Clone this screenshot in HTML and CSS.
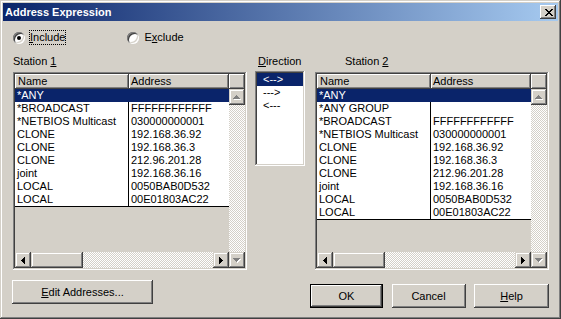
FILE: index.html
```html
<!DOCTYPE html>
<html lang="en">
<head>
    <meta charset="UTF-8">
    <title>Address Expression</title>
    <link rel="stylesheet" href="styles.css">
</head>
<body>
    <div class="window">
        <div class="titlebar">
            <span class="title">Address Expression</span>
            <span class="close-btn">
                <svg width="8" height="7" viewBox="0 0 8 7"><path d="M0 0h2v1h-2zM6 0h2v1h-2zM1 1h2v1h-2zM5 1h2v1h-2zM2 2h4v1h-4zM3 3h2v1h-2zM2 4h4v1h-4zM1 5h2v1h-2zM5 5h2v1h-2zM0 6h2v1h-2zM6 6h2v1h-2z" fill="#000"/></svg>
            </span>
        </div>

        <div class="content">
            <div class="mode-row">
                <label class="radio">
                    <span class="radio-dot checked"></span>
                    <span class="radio-text focused"><u>I</u>nclude</span>
                </label>
                <label class="radio exclude">
                    <span class="radio-dot"></span>
                    <span class="radio-text">E<u>x</u>clude</span>
                </label>
            </div>

            <div class="panes">
                <!-- Station 1 -->
                <div class="station">
                    <div class="pane-label">Station <u>1</u></div>
                    <div class="grid">
                        <div class="grid-head">
                            <span class="head-cell col-name">Name</span>
                            <span class="head-cell col-addr">Address</span>
                            <span class="head-cell col-blank"></span>
                        </div>
                        <div class="grid-main">
                            <div class="rows-area">
                                <div class="rows">
                                    <div class="row selected"><span class="cell-name">*ANY</span><span class="cell-addr"></span></div>
                                    <div class="row"><span class="cell-name">*BROADCAST</span><span class="cell-addr">FFFFFFFFFFFF</span></div>
                                    <div class="row"><span class="cell-name">*NETBIOS Multicast</span><span class="cell-addr">030000000001</span></div>
                                    <div class="row"><span class="cell-name">CLONE</span><span class="cell-addr">192.168.36.92</span></div>
                                    <div class="row"><span class="cell-name">CLONE</span><span class="cell-addr">192.168.36.3</span></div>
                                    <div class="row"><span class="cell-name">CLONE</span><span class="cell-addr">212.96.201.28</span></div>
                                    <div class="row"><span class="cell-name">joint</span><span class="cell-addr">192.168.36.16</span></div>
                                    <div class="row"><span class="cell-name">LOCAL</span><span class="cell-addr">0050BAB0D532</span></div>
                                    <div class="row"><span class="cell-name">LOCAL</span><span class="cell-addr">00E01803AC22</span></div>
                                </div>
                            </div>
                            <div class="vscroll">
                                <span class="sb-btn">
                                    <svg width="8" height="5" viewBox="0 0 8 5"><path d="M4 1h1v1h-1zM3 2h3v1h-3zM2 3h5v1h-5zM1 4h7v1h-7z" fill="#fff"/><path d="M3 0h1v1h-1zM2 1h3v1h-3zM1 2h5v1h-5zM0 3h7v1h-7z" fill="#808080"/></svg>
                                </span>
                                <span class="track"></span>
                            </div>
                        </div>
                        <div class="grid-foot">
                            <div class="hscroll">
                                <span class="sb-btn">
                                    <svg width="4" height="7" viewBox="0 0 4 7"><path d="M3 0h1v7h-1zM2 1h1v5h-1zM1 2h1v3h-1zM0 3h1v1h-1z" fill="#000"/></svg>
                                </span>
                                <span class="thumb"></span>
                                <span class="track"></span>
                                <span class="sb-btn">
                                    <svg width="4" height="7" viewBox="0 0 4 7"><path d="M0 0h1v7h-1zM1 1h1v5h-1zM2 2h1v3h-1zM3 3h1v1h-1z" fill="#000"/></svg>
                                </span>
                            </div>
                            <span class="sb-btn">
                                <svg width="8" height="5" viewBox="0 0 8 5"><path d="M1 1h7v1h-7zM2 2h5v1h-5zM3 3h3v1h-3zM4 4h1v1h-1z" fill="#fff"/><path d="M0 0h7v1h-7zM1 1h5v1h-5zM2 2h3v1h-3zM3 3h1v1h-1z" fill="#808080"/></svg>
                            </span>
                        </div>
                    </div>
                    <button class="btn edit-btn"><u>E</u>dit Addresses...</button>
                </div>

                <!-- Direction -->
                <div class="direction">
                    <div class="pane-label dir-label"><u>D</u>irection</div>
                    <div class="dir-list">
                        <div class="dir-item selected">&lt;--&gt;</div>
                        <div class="dir-item">---&gt;</div>
                        <div class="dir-item">&lt;---</div>
                    </div>
                </div>

                <!-- Station 2 -->
                <div class="station station-right">
                    <div class="pane-label st2-label">Station <u>2</u></div>
                    <div class="grid">
                        <div class="grid-head">
                            <span class="head-cell col-name">Name</span>
                            <span class="head-cell col-addr">Address</span>
                            <span class="head-cell col-blank"></span>
                        </div>
                        <div class="grid-main">
                            <div class="rows-area">
                                <div class="rows">
                                    <div class="row selected"><span class="cell-name">*ANY</span><span class="cell-addr"></span></div>
                                    <div class="row"><span class="cell-name">*ANY GROUP</span><span class="cell-addr"></span></div>
                                    <div class="row"><span class="cell-name">*BROADCAST</span><span class="cell-addr">FFFFFFFFFFFF</span></div>
                                    <div class="row"><span class="cell-name">*NETBIOS Multicast</span><span class="cell-addr">030000000001</span></div>
                                    <div class="row"><span class="cell-name">CLONE</span><span class="cell-addr">192.168.36.92</span></div>
                                    <div class="row"><span class="cell-name">CLONE</span><span class="cell-addr">192.168.36.3</span></div>
                                    <div class="row"><span class="cell-name">CLONE</span><span class="cell-addr">212.96.201.28</span></div>
                                    <div class="row"><span class="cell-name">joint</span><span class="cell-addr">192.168.36.16</span></div>
                                    <div class="row"><span class="cell-name">LOCAL</span><span class="cell-addr">0050BAB0D532</span></div>
                                    <div class="row"><span class="cell-name">LOCAL</span><span class="cell-addr">00E01803AC22</span></div>
                                </div>
                            </div>
                            <div class="vscroll">
                                <span class="sb-btn">
                                    <svg width="8" height="5" viewBox="0 0 8 5"><path d="M4 1h1v1h-1zM3 2h3v1h-3zM2 3h5v1h-5zM1 4h7v1h-7z" fill="#fff"/><path d="M3 0h1v1h-1zM2 1h3v1h-3zM1 2h5v1h-5zM0 3h7v1h-7z" fill="#808080"/></svg>
                                </span>
                                <span class="track"></span>
                            </div>
                        </div>
                        <div class="grid-foot">
                            <div class="hscroll">
                                <span class="sb-btn">
                                    <svg width="4" height="7" viewBox="0 0 4 7"><path d="M3 0h1v7h-1zM2 1h1v5h-1zM1 2h1v3h-1zM0 3h1v1h-1z" fill="#000"/></svg>
                                </span>
                                <span class="thumb"></span>
                                <span class="track"></span>
                                <span class="sb-btn">
                                    <svg width="4" height="7" viewBox="0 0 4 7"><path d="M0 0h1v7h-1zM1 1h1v5h-1zM2 2h1v3h-1zM3 3h1v1h-1z" fill="#000"/></svg>
                                </span>
                            </div>
                            <span class="sb-btn">
                                <svg width="8" height="5" viewBox="0 0 8 5"><path d="M1 1h7v1h-7zM2 2h5v1h-5zM3 3h3v1h-3zM4 4h1v1h-1z" fill="#fff"/><path d="M0 0h7v1h-7zM1 1h5v1h-5zM2 2h3v1h-3zM3 3h1v1h-1z" fill="#808080"/></svg>
                            </span>
                        </div>
                    </div>
                    <div class="button-row">
                        <button class="btn default-btn">OK</button>
                        <button class="btn cancel-btn">Cancel</button>
                        <button class="btn help-btn"><u>H</u>elp</button>
                    </div>
                </div>
            </div>
        </div>
    </div>
</body>
</html>
```

FILE: styles.css
```css
/* Reset */
* {
    margin: 0;
    padding: 0;
    box-sizing: border-box;
}

body {
    font-family: 'Liberation Sans', Arial, sans-serif;
    font-size: 11px;
    color: #000;
    background: #d4d0c8;
    overflow: hidden;
}

u {
    text-decoration: underline;
    text-underline-offset: 1px;
}

/* Dialog frame */
.window {
    width: 561px;
    height: 319px;
    padding: 3px;
    background: #d4d0c8;
    box-shadow: inset -1px -1px #404040, inset 1px 1px #d4d0c8,
                inset -2px -2px #808080, inset 2px 2px #fff;
}

/* Title bar */
.titlebar {
    height: 18px;
    display: flex;
    align-items: center;
    justify-content: space-between;
    padding: 0 2px 0 2px;
    background: linear-gradient(90deg, #0a246a, #a6caf0);
}

.title {
    color: #fff;
    font-weight: bold;
    line-height: 18px;
}

.close-btn {
    width: 16px;
    height: 14px;
    display: flex;
    align-items: center;
    justify-content: center;
    padding-left: 1px;
    background: #d4d0c8;
    box-shadow: inset -1px -1px #404040, inset 1px 1px #fff,
                inset -2px -2px #808080;
}

.close-btn svg {
    display: block;
}

/* Body */
.content {
    padding: 9px 0 0 10px;
}

/* Include / Exclude */
.mode-row {
    display: flex;
    height: 15px;
    align-items: center;
}

.radio {
    display: flex;
    align-items: center;
}

.radio.exclude {
    margin-left: 61px;
}

.radio-dot {
    position: relative;
    width: 12px;
    height: 12px;
    border-radius: 50%;
    background: #fff;
    box-shadow: inset 1px 1px #808080, inset -1px -1px #fff,
                inset 2px 2px #404040, inset -2px -2px #d4d0c8;
}

.radio-dot.checked::after {
    content: "";
    position: absolute;
    left: 4px;
    top: 4px;
    width: 4px;
    height: 4px;
    border-radius: 50%;
    background: #000;
}

.radio-text {
    margin-left: 4px;
    height: 15px;
    line-height: 13px;
    border: 1px solid transparent;
}

.radio-text.focused {
    border: 1px dotted #000;
}

/* Three panes */
.panes {
    display: flex;
    margin-top: 10px;
}

.pane-label {
    line-height: 13px;
    height: 13px;
}

.station {
    width: 234px;
}

.direction {
    width: 50px;
    margin-left: 8px;
}

.station-right {
    margin-left: 10px;
}

.dir-label {
    margin-left: 3px;
}

.st2-label {
    margin-left: 30px;
}

/* Address grid */
.grid {
    margin-top: 4px;
    width: 234px;
    height: 198px;
    padding: 2px;
    display: flex;
    flex-direction: column;
    background: #d4d0c8;
    box-shadow: inset -1px -1px #fff, inset 1px 1px #808080,
                inset -2px -2px #d4d0c8, inset 2px 2px #404040;
}

.grid-head {
    display: flex;
    height: 15px;
}

.head-cell {
    height: 15px;
    line-height: 14px;
    padding-left: 3px;
    background: #d4d0c8;
    box-shadow: inset -1px -1px #404040, inset 1px 1px #fff,
                inset -2px -2px #808080;
}

.col-name {
    width: 114px;
}

.col-addr {
    width: 100px;
    padding-left: 2px;
}

.col-blank {
    width: 16px;
}

.grid-main {
    display: flex;
    height: 163px;
}

.rows-area {
    width: 214px;
}

.rows {
    background: #fff;
    border-bottom: 1px solid #000;
}

.row {
    display: flex;
    height: 13px;
    line-height: 13px;
    white-space: nowrap;
}

.cell-name {
    width: 114px;
    padding-left: 2px;
    border-right: 1px solid #000;
}

.cell-addr {
    flex: 1;
    padding-left: 2px;
}

.row.selected {
    background: #0a246a;
    color: #fff;
}

.row.selected .cell-name {
    border-right-color: #0a246a;
}

/* Scroll bars */
.track {
    flex: 1;
    background: repeating-conic-gradient(#fff 0 25%, #d4d0c8 0 50%) 0 0 / 2px 2px;
}

.vscroll {
    width: 16px;
    display: flex;
    flex-direction: column;
}

.sb-btn {
    width: 16px;
    height: 16px;
    flex-shrink: 0;
    display: flex;
    align-items: center;
    justify-content: center;
    background: #d4d0c8;
    box-shadow: inset -1px -1px #404040, inset 1px 1px #d4d0c8,
                inset -2px -2px #808080, inset 2px 2px #fff;
}

.sb-btn svg {
    display: block;
}

.grid-foot {
    display: flex;
    height: 16px;
}

.hscroll {
    width: 214px;
    display: flex;
}

.thumb {
    width: 52px;
    background: #d4d0c8;
    box-shadow: inset -1px -1px #404040, inset 1px 1px #d4d0c8,
                inset -2px -2px #808080, inset 2px 2px #fff;
}

/* Direction list */
.dir-list {
    margin-top: 3px;
    height: 95px;
    padding: 2px;
    background: #fff;
    box-shadow: inset -1px -1px #fff, inset 1px 1px #808080,
                inset -2px -2px #d4d0c8, inset 2px 2px #404040;
}

.dir-item {
    height: 13px;
    line-height: 13px;
    padding-left: 6px;
}

.dir-item.selected {
    background: #0a246a;
    color: #fff;
}

/* Push buttons */
.btn {
    font-family: inherit;
    font-size: 11px;
    color: #000;
    height: 24px;
    border: none;
    background: #d4d0c8;
    box-shadow: inset -1px -1px #404040, inset 1px 1px #fff,
                inset -2px -2px #808080, inset 2px 2px #d4d0c8;
}

.edit-btn {
    display: block;
    width: 141px;
    margin: 10px 0 0 -1px;
}

.button-row {
    display: flex;
    justify-content: space-between;
    width: 239px;
    margin: 14px 0 0 -5px;
}

.default-btn {
    width: 73px;
    box-shadow: inset 0 0 0 1px #000, inset -2px -2px #404040,
                inset 2px 2px #fff, inset -3px -3px #808080;
}

.cancel-btn {
    width: 74px;
}

.help-btn {
    width: 75px;
}
```
